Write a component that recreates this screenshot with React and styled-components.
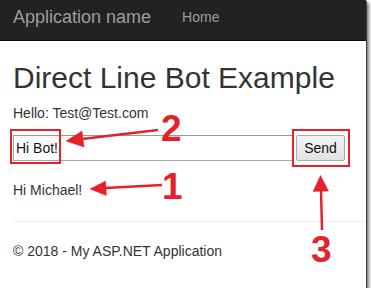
import React from 'react'
import styled, { createGlobalStyle } from 'styled-components'

const red = '#e5222b'

const GlobalStyle = createGlobalStyle`
  html, body {
    margin: 0;
    padding: 0;
    background: #fff;
  }
  body {
    font-family: "Liberation Sans", Arial, sans-serif;
    font-size: 14px;
    line-height: 1.42857;
    color: #333;
  }
`

const Frame = styled.div`
  position: relative;
  width: 366px;
  height: 288px;
  overflow: hidden;
  background: #fff;
  box-shadow: 1px 1px 0 #444, 3px 3px 3px rgba(0, 0, 0, 0.55);
`

const Navbar = styled.nav`
  display: flex;
  align-items: center;
  gap: 31px;
  height: 41px;
  padding: 0 13px 4px;
  background: #222;
  border-bottom: 1px solid #080808;
  box-sizing: border-box;
`

const Brand = styled.a`
  font-size: 18px;
  color: #9d9d9d;
  text-decoration: none;
`

const NavLink = styled.a`
  font-size: 14px;
  color: #9d9d9d;
  text-decoration: none;
`

const Container = styled.main`
  padding: 0 0 0 13px;
`

const Title = styled.h2`
  margin: 20px 0 10px;
  font-size: 30px;
  font-weight: 500;
  line-height: 1.1;
  color: #333;
`

const Line = styled.p`
  margin: 0;
`

const ChatRow = styled.form`
  display: flex;
  align-items: stretch;
  gap: 3px;
  margin: 11px 0 20px;
  height: 26px;
`

const Input = styled.input`
  width: 280px;
  box-sizing: border-box;
  padding: 0 2px;
  border: 1px solid #a9a9a9;
  border-top-color: #9a9a9a;
  font-family: inherit;
  font-size: 14px;
  color: #111;
  background: #fff;
  outline: none;
`

const Button = styled.button`
  width: 49px;
  box-sizing: border-box;
  padding: 0;
  border: 1px solid #adadad;
  border-radius: 2px;
  background: linear-gradient(#f4f4f4, #e2e2e2);
  font-family: inherit;
  font-size: 14px;
  color: #111;
`

const Rule = styled.hr`
  margin: 20px 0;
  border: 0;
  border-top: 1px solid #eee;
`

const Footer = styled.footer`
  margin: 0;
`

// annotation layer drawn over the screenshot
const Highlight = styled.div`
  position: absolute;
  left: ${(p) => p.x}px;
  top: ${(p) => p.y}px;
  width: ${(p) => p.w}px;
  height: ${(p) => p.h}px;
  box-sizing: border-box;
  border: 2px solid ${red};
`

const Marker = styled.span`
  position: absolute;
  left: ${(p) => p.x}px;
  top: ${(p) => p.y}px;
  font-family: "Liberation Sans", Arial, sans-serif;
  font-weight: bold;
  font-size: 37px;
  line-height: 1;
  color: ${red};
`

const Arrows = styled.svg`
  position: absolute;
  left: 0;
  top: 0;
  pointer-events: none;
`

const arrows = [
  { from: [158, 130], to: [82, 139], head: '66,141 84,147 82,131' },
  { from: [162, 185], to: [105, 188], head: '90,189 106.4,195.5 105.6,181' },
  { from: [322, 230], to: [321, 190], head: '320.5,175.5 313,191.5 328.5,191' },
]

const App = () => {
  return (
    <>
      <GlobalStyle />
      <Frame>
        <Navbar>
          <Brand href="#">Application name</Brand>
          <NavLink href="#">Home</NavLink>
        </Navbar>
        <Container>
          <Title>Direct Line Bot Example</Title>
          <Line>Hello: Test@Test.com</Line>
          <ChatRow onSubmit={(e) => e.preventDefault()}>
            <Input defaultValue="Hi Bot!" />
            <Button type="submit">Send</Button>
          </ChatRow>
          <Line>Hi Michael!</Line>
          <Rule />
          <Footer>© 2018 - My ASP.NET Application</Footer>
        </Container>

        <Highlight x={10} y={129} w={51} h={35} />
        <Highlight x={292} y={129} w={58} h={38} />
        <Arrows width="366" height="288">
          {arrows.map((a, i) => (
            <g key={i} fill={red} stroke={red}>
              <line
                x1={a.from[0]}
                y1={a.from[1]}
                x2={a.to[0]}
                y2={a.to[1]}
                strokeWidth="2.5"
              />
              <polygon points={a.head} strokeWidth="0.5" />
            </g>
          ))}
        </Arrows>
        <Marker x={161} y={110}>2</Marker>
        <Marker x={162} y={168}>1</Marker>
        <Marker x={311} y={231}>3</Marker>
      </Frame>
    </>
  )
}

export default App
